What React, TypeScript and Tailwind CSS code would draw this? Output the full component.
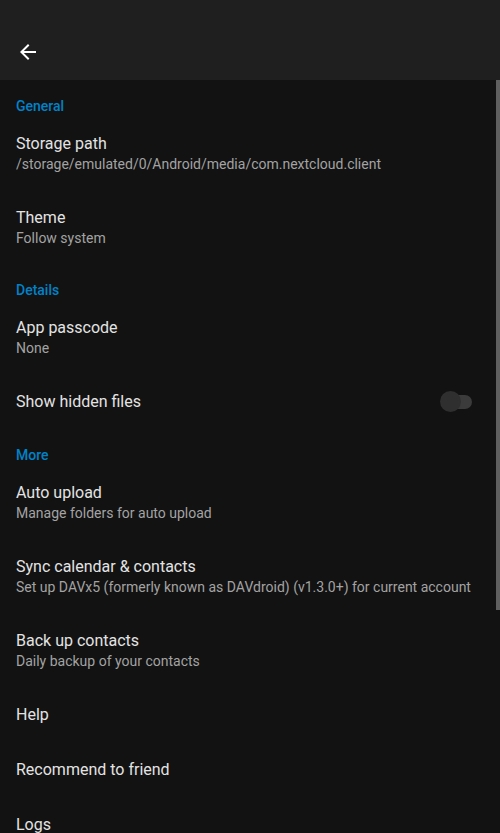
import React, { useState } from 'react';

type Item = { title: string; summary?: string; toggle?: boolean };
type Section = { name: string; items: Item[] };

const SECTIONS: Section[] = [
  {
    name: 'General',
    items: [
      { title: 'Storage path', summary: '/storage/emulated/0/Android/media/com.nextcloud.client' },
      { title: 'Theme', summary: 'Follow system' },
    ],
  },
  {
    name: 'Details',
    items: [
      { title: 'App passcode', summary: 'None' },
      { title: 'Show hidden files', toggle: true },
    ],
  },
  {
    name: 'More',
    items: [
      { title: 'Auto upload', summary: 'Manage folders for auto upload' },
      { title: 'Sync calendar & contacts', summary: 'Set up DAVx5 (formerly known as DAVdroid) (v1.3.0+) for current account' },
      { title: 'Back up contacts', summary: 'Daily backup of your contacts' },
      { title: 'Help' },
      { title: 'Recommend to friend' },
      { title: 'Logs' },
    ],
  },
];

function Switch({ on, onChange }: { on: boolean; onChange: () => void }) {
  return (
    <button onClick={onChange} className="relative w-[32px] h-[22px] flex items-center">
      <span className="absolute left-[10px] right-0 h-[14px] rounded-full bg-[#3b3b3b]" />
      <span className="absolute left-0 w-[21px] h-[21px] rounded-full bg-[#2f2f2f]" />
    </button>
  );
}

export default function App() {
  const [hidden, setHidden] = useState(false);

  return (
    <div className="h-[833px] overflow-hidden bg-[#121212] font-['Roboto','Liberation_Sans',sans-serif] flex flex-col">
      <header className="h-[80px] shrink-0 bg-[#1f1f1f] flex items-end pb-[16px] px-[16px]">
        <button className="w-[24px] h-[24px] text-white">
          <svg viewBox="0 0 24 24" width="24" height="24" fill="currentColor">
            <path d="M20 11H7.83l5.59-5.59L12 4l-8 8 8 8 1.41-1.41L7.83 13H20v-2z" />
          </svg>
        </button>
      </header>

      <div className="relative flex-1">
        {/* scrollbar */}
        <div className="absolute right-0 top-0 w-[4px] h-[530px] bg-[#5f5f5f]" />
        {SECTIONS.map(section => (
          <div key={section.name}>
            <div className="h-[36px] px-[16px] pt-[18px] text-[14px] leading-[16px] font-medium text-[#0082c9]">
              {section.name}
            </div>
            {section.items.map(item => (
              item.summary ? (
                <div key={item.title} className="h-[74px] px-[16px] pt-[17px] flex flex-col">
                  <span className="text-[16px] leading-[21px] text-[#e3e3e3]">{item.title}</span>
                  <span className="text-[14px] leading-[20px] text-[#a3a3a3] whitespace-nowrap">{item.summary}</span>
                </div>
              ) : (
                <div key={item.title} className="h-[55px] px-[16px] pr-[28px] flex items-center justify-between">
                  <span className="text-[16px] leading-[21px] text-[#e3e3e3]">{item.title}</span>
                  {item.toggle && <Switch on={hidden} onChange={() => setHidden(!hidden)} />}
                </div>
              )
            ))}
          </div>
        ))}
      </div>
    </div>
  );
}
